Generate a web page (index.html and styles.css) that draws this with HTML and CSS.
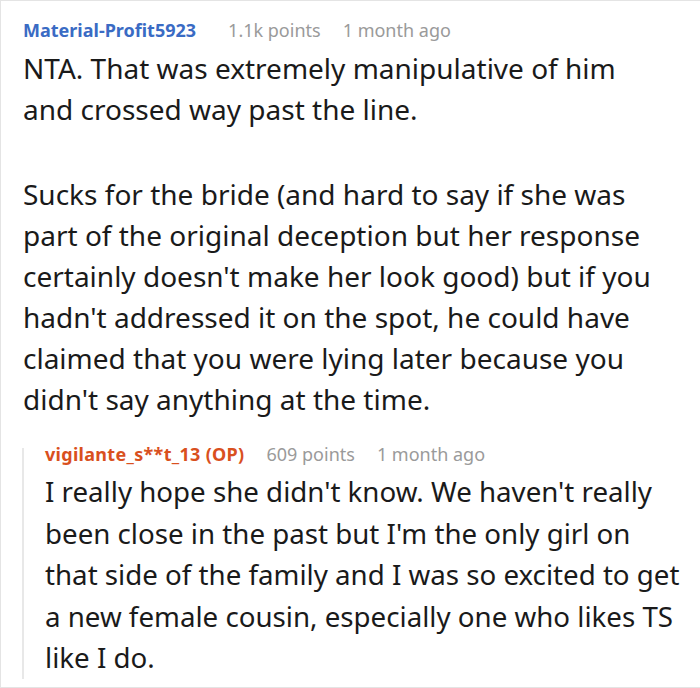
FILE: index.html
```html
<!DOCTYPE html>
<html lang="en">
<head>
<meta charset="utf-8">
<title>Comment</title>
<link rel="stylesheet" href="styles.css">
</head>
<body>
<div class="comment">
  <div class="meta">
    <span class="author">Material-Profit5923</span>
    <span class="info">1.1k points</span>
    <span class="info">1 month ago</span>
  </div>
  <div class="body">
    <p>NTA. That was extremely manipulative of him<br>and crossed way past the line.</p>
    <p>Sucks for the bride (and hard to say if she was<br>part of the original deception but her response<br>certainly doesn't make her look good) but if you<br>hadn't addressed it on the spot, he could have<br>claimed that you were lying later because you<br>didn't say anything at the time.</p>
  </div>
  <div class="reply">
    <div class="meta">
      <span class="author op">vigilante_s**t_13 (OP)</span>
      <span class="info">609 points</span>
      <span class="info">1 month ago</span>
    </div>
    <div class="body">
      <p>I really hope she didn't know. We haven't really<br>been close in the past but I'm the only girl on<br>that side of the family and I was so excited to get<br>a new female cousin, especially one who likes TS<br>like I do.</p>
    </div>
  </div>
</div>
</body>
</html>
```

FILE: styles.css
```css
html, body {
  margin: 0;
  padding: 0;
  background: #ffffff;
}

body {
  font-family: "Noto Sans", "Open Sans", sans-serif;
  color: #1a1a1a;
}

.comment {
  box-sizing: border-box;
  height: 688px;
  border-top: 1px solid #e4e4e4;
  border-left: 1px solid #e4e4e4;
  border-bottom: 1px solid #e4e4e4;
  padding: 15px 0 0 22px;
  overflow: hidden;
}

.meta {
  display: flex;
  gap: 22px;
  font-size: 18px;
  line-height: 28px;
  white-space: nowrap;
}

.author {
  font-weight: 700;
  color: #3a6bc4;
  margin-right: 10px;
}

.author.op {
  color: #d9501e;
  margin-right: 0;
  letter-spacing: 0.3px;
}

.info {
  color: #9a9a9a;
}

.body {
  margin-top: 4px;
  font-size: 28px;
  line-height: 41px;
  white-space: nowrap;
}

.body p {
  margin: 0 0 44px;
}

.reply {
  margin: 0 0 0 -1px;
  padding-left: 21px;
  border-left: 2px solid #e8e8e8;
}

.reply .meta {
  line-height: 12px;
}

.reply .body {
  margin-top: 11px;
  font-size: 27.7px;
  line-height: 41.5px;
}

.reply .body p {
  margin-bottom: -9px;
}

.comment > .body p:last-child {
  margin-bottom: 28px;
}
```
